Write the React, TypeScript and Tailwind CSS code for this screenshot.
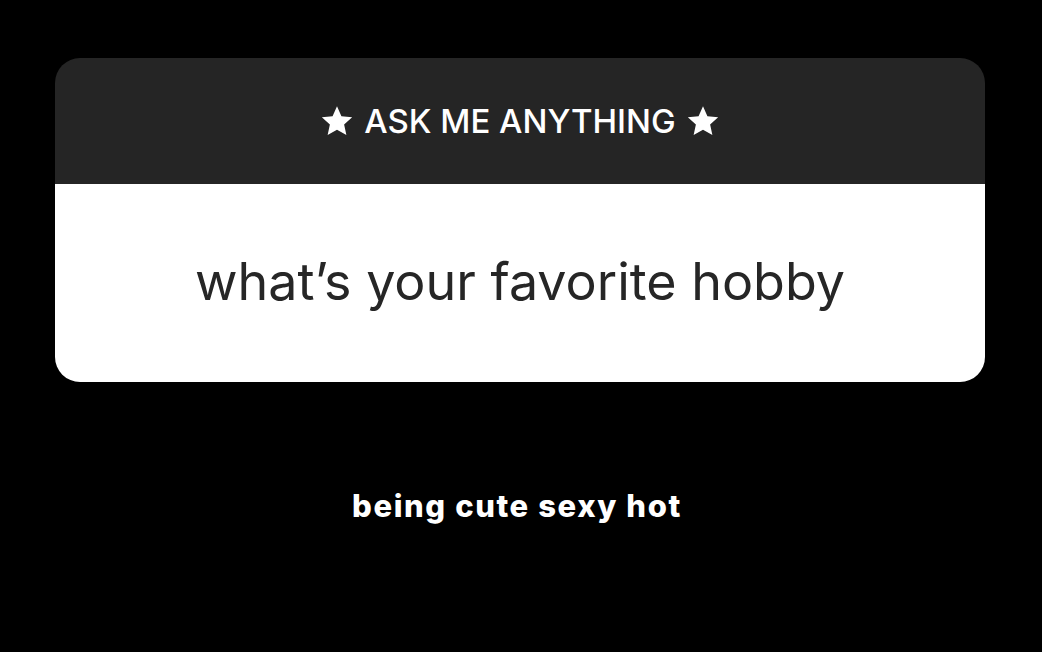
import React from 'react';

const Star = () => (
  <svg viewBox="0 0 24 24" className="w-[36px] h-[36px]" fill="currentColor">
    <path d="M12 2.2l2.95 6.55 7.15.75-5.35 4.8 1.5 7.05L12 17.75l-6.25 3.6 1.5-7.05L1.9 9.5l7.15-.75z" />
  </svg>
);

export default function App() {
  return (
    <div className="min-h-[652px] bg-black flex flex-col items-center pt-[58px]" style={{ fontFamily: 'Inter, "Liberation Sans", sans-serif' }}>
      <div className="w-[930px] -translate-x-px rounded-[25px] overflow-hidden">
        <div className="h-[126px] bg-[#252525] flex items-center justify-center gap-[9px] text-white">
          <Star />
          <span className="text-[33px] font-medium leading-none">ASK ME ANYTHING</span>
          <Star />
        </div>
        <div className="h-[198px] bg-white flex items-center justify-center">
          <span className="text-[52px] text-[#262626] leading-none pb-[2px]">what’s your favorite hobby</span>
        </div>
      </div>
      <div className="mt-[108px] -translate-x-[4px] text-white font-extrabold text-[31px] tracking-[1.6px] leading-none">being cute sexy hot</div>
    </div>
  );
}
